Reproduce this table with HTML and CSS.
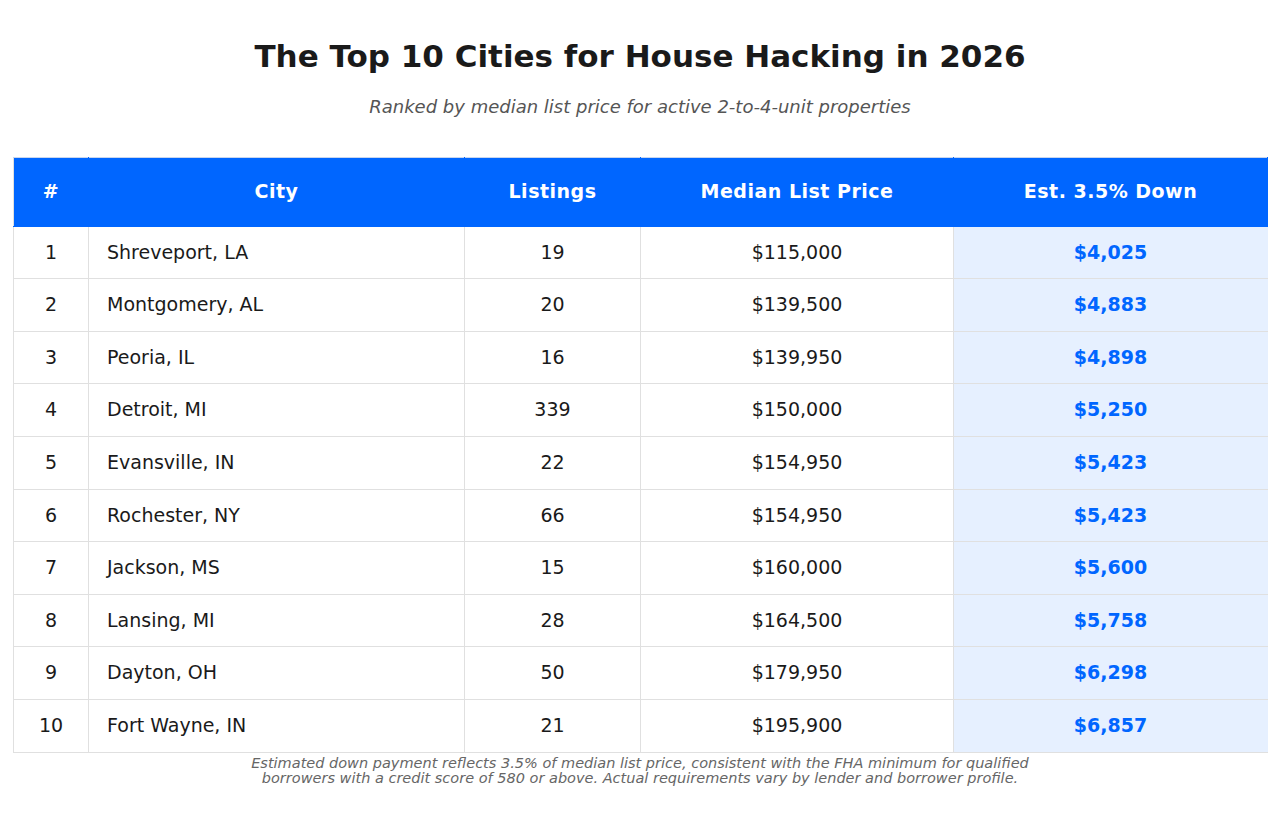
FILE: index.html
```html
<!DOCTYPE html>
<html lang="en">
<head>
<meta charset="utf-8">
<title>The Top 10 Cities for House Hacking in 2026</title>
<link rel="stylesheet" href="styles.css">
</head>
<body>
<main class="page">
  <h1 class="title">The Top 10 Cities for House Hacking in 2026</h1>
  <p class="subtitle">Ranked by median list price for active 2-to-4-unit properties</p>
  <table class="cities">
    <colgroup>
      <col class="c-rank"><col class="c-city"><col class="c-list"><col class="c-price"><col class="c-down">
    </colgroup>
    <thead>
      <tr><th>#</th><th>City</th><th>Listings</th><th>Median List Price</th><th>Est. 3.5% Down</th></tr>
    </thead>
    <tbody>
      <tr><td>1</td><td class="city">Shreveport, LA</td><td>19</td><td>$115,000</td><td class="down">$4,025</td></tr>
      <tr><td>2</td><td class="city">Montgomery, AL</td><td>20</td><td>$139,500</td><td class="down">$4,883</td></tr>
      <tr><td>3</td><td class="city">Peoria, IL</td><td>16</td><td>$139,950</td><td class="down">$4,898</td></tr>
      <tr><td>4</td><td class="city">Detroit, MI</td><td>339</td><td>$150,000</td><td class="down">$5,250</td></tr>
      <tr><td>5</td><td class="city">Evansville, IN</td><td>22</td><td>$154,950</td><td class="down">$5,423</td></tr>
      <tr><td>6</td><td class="city">Rochester, NY</td><td>66</td><td>$154,950</td><td class="down">$5,423</td></tr>
      <tr><td>7</td><td class="city">Jackson, MS</td><td>15</td><td>$160,000</td><td class="down">$5,600</td></tr>
      <tr><td>8</td><td class="city">Lansing, MI</td><td>28</td><td>$164,500</td><td class="down">$5,758</td></tr>
      <tr><td>9</td><td class="city">Dayton, OH</td><td>50</td><td>$179,950</td><td class="down">$6,298</td></tr>
      <tr><td>10</td><td class="city">Fort Wayne, IN</td><td>21</td><td>$195,900</td><td class="down">$6,857</td></tr>
    </tbody>
  </table>
  <p class="note">Estimated down payment reflects 3.5% of median list price, consistent with the FHA minimum for qualified borrowers with a credit score of 580 or above. Actual requirements vary by lender and borrower profile.</p>
</main>
</body>
</html>
```
FILE: styles.css
```css
html, body {
  margin: 0;
  padding: 0;
  background: #ffffff;
}
body {
  font-family: "DejaVu Sans", "Liberation Sans", sans-serif;
  color: #1a1a1a;
}
.page {
  padding: 0 13px;
}
.title {
  margin: 38px 0 0;
  font-size: 31px;
  line-height: 36px;
  font-weight: bold;
  text-align: center;
  color: #1a1a1a;
}
.subtitle {
  margin: 23px 0 0;
  font-size: 18px;
  line-height: 20px;
  font-style: italic;
  text-align: center;
  color: #555555;
}
.cities {
  margin-top: 40px;
  width: 100%;
  border-collapse: collapse;
  table-layout: fixed;
  font-size: 19px;
  line-height: 21.6px;
}
.c-rank { width: 75px; }
.c-city { width: 376px; }
.c-list { width: 176px; }
.c-price { width: 313px; }
.c-down { width: 314px; }
.cities th {
  background: #0066ff;
  color: #ffffff;
  font-weight: bold;
  letter-spacing: 0.5px;
  padding: 23px 8px;
  text-align: center;
  border: 1px solid #0066ff;
  border-top-color: #c9d6ee;
}
.cities th:first-child { border-left-color: #e0e0e0; }
.cities td {
  padding: 15px 8px;
  text-align: center;
  border: 1px solid #e0e0e0;
  color: #1a1a1a;
}
.cities td.city {
  text-align: left;
  padding-left: 18px;
}
.cities td.down {
  background: #e6f0ff;
  color: #0066ff;
  font-weight: bold;
  border-right-color: #e6f0ff;
}
.note {
  max-width: 820px;
  margin: 3px auto 0;
  font-size: 14.5px;
  line-height: 15px;
  font-style: italic;
  text-align: center;
  color: #666666;
}
```
